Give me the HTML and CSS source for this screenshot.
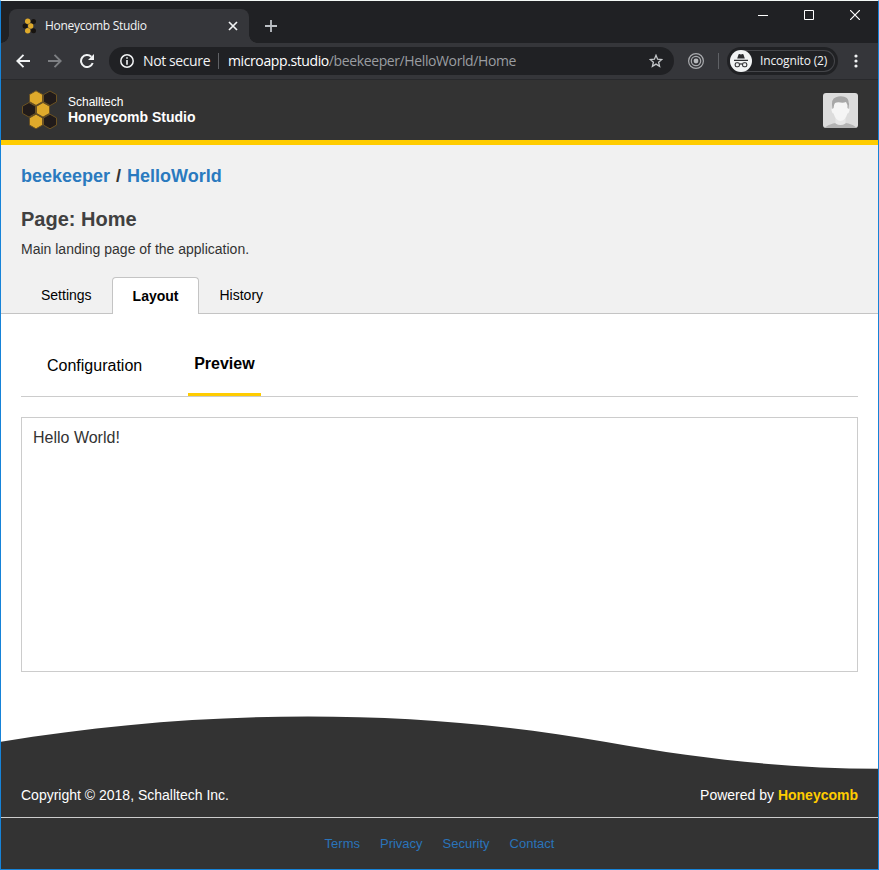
FILE: index.html
```html
<!DOCTYPE html>
<html lang="en">
<head>
<meta charset="utf-8">
<title>Honeycomb Studio</title>
<link rel="stylesheet" href="styles.css">
</head>
<body>
<svg width="0" height="0" class="defs">
  <symbol id="comb" viewBox="0 0 36 40">
    <g stroke="#6b5222" stroke-width="1">
      <path fill="#211b1a" d="M28 1l6.500 3.700v7.200L28 15.600l-6.500-3.700V4.700zM28 24.200l6.500 3.700v7.200L28 38.800l-6.500-3.700v-7.200zM7 12.500l6.500 3.700v7.200L7 27.100.5 23.400v-7.200z"/>
      <path fill="#dfaa2b" d="M14 .8l6.500 3.700v7.200L14 15.400l-6.500-3.700V4.500zM21 12.500l6.500 3.700v7.200L21 27.100l-6.500-3.700v-7.200zM14 24.200l6.500 3.700v7.200L14 38.800l-6.500-3.700v-7.200z"/>
    </g>
  </symbol>
</svg>
<div class="window">
  <div class="tabstrip">
    <div class="browser-tab">
      <svg class="favicon" width="15" height="16" viewBox="0 0 15 16"><g fill="#17130f"><circle cx="11.500" cy="3.500" r="2.500"/><circle cx="3" cy="8" r="2.500"/><circle cx="11.500" cy="12.800" r="2.500"/></g><g fill="#dfaa2b"><circle cx="5.700" cy="3.300" r="2.700"/><circle cx="8.700" cy="8" r="2.700"/><circle cx="5.700" cy="12.800" r="2.700"/></g></svg>
      <span class="tab-title">Honeycomb Studio</span>
      <svg class="tab-close" width="10" height="10" viewBox="0 0 10 10"><path d="M1 1l8 8M9 1l-8 8" stroke="#f1f3f4" stroke-width="1.7"/></svg>
    </div>
    <svg class="new-tab" width="12" height="12" viewBox="0 0 12 12"><path d="M6 0v12M0 6h12" stroke="#bdc1c6" stroke-width="1.800"/></svg>
    <div class="win-controls">
      <svg width="10" height="10" viewBox="0 0 10 10"><path d="M0 5.500h10" stroke="#fff"/></svg>
      <svg width="10" height="10" viewBox="0 0 10 10"><path d="M.5.5h9v9h-9z" fill="none" stroke="#fff"/></svg>
      <svg width="10" height="10" viewBox="0 0 10 10"><path d="M0 0l10 10M10 0L0 10" stroke="#fff" stroke-width="1.200"/></svg>
    </div>
  </div>
  <div class="toolbar">
    <div class="nav">
      <svg width="14" height="14" viewBox="0 0 14 14" fill="none" stroke="#f1f3f4" stroke-width="1.900"><path d="M14 7H1.500M7.500.800L1.300 7l6.200 6.200"/></svg>
      <svg width="14" height="14" viewBox="0 0 14 14" fill="none" stroke="#7d7f83" stroke-width="1.900"><path d="M0 7h12.500M6.500.800L12.700 7l-6.200 6.200"/></svg>
      <svg width="14" height="14" viewBox="0 0 14 14" fill="none" stroke="#f1f3f4" stroke-width="2"><path d="M12.700 9A6 6 0 1 1 11.300 2.800"/><path fill="#f1f3f4" stroke="none" d="M14 0v6H8z"/></svg>
    </div>
    <div class="omnibox">
      <svg width="14" height="14" viewBox="0 0 14 14"><circle cx="7" cy="7" r="6.200" fill="none" stroke="#f1f3f4" stroke-width="1.500"/><path d="M7 3.200v1.600M7 6v4.800" stroke="#f1f3f4" stroke-width="1.600"/></svg>
      <span class="secure">Not secure</span>
      <span class="sep"></span>
      <span class="url"><b>microapp.studio</b>/beekeeper/HelloWorld/Home</span>
      <svg class="star" width="14" height="14" viewBox="0 0 14 14"><path d="M7 1.300l1.600 3.900 4.200.3-3.200 2.700 1 4.200L7 10.100l-3.600 2.300 1-4.200-3.200-2.700 4.200-.3z" fill="none" stroke="#c4c7ca" stroke-width="1.300"/></svg>
    </div>
    <svg class="target" width="16" height="16" viewBox="0 0 16 16"><g fill="none" stroke="#a9abae" stroke-width="1.200"><circle cx="8" cy="8" r="7.400"/><circle cx="8" cy="8" r="4.700"/></g><circle cx="8" cy="8" r="2.400" fill="#b8babd"/></svg>
    <span class="sep toolbar-sep"></span>
    <div class="incognito">
      <div class="incognito-pill">
        <svg width="22" height="22" viewBox="0 0 22 22"><circle cx="11" cy="11" r="11" fill="#f1f3f4"/><path fill="#2d2e31" d="M7.200 8.500l1.300-4q.2-.6.900-.4l1.600.4 1.600-.4q.7-.2.900.4l1.300 4zM4 9.700h14v1.300H4z"/><g fill="none" stroke="#2d2e31" stroke-width="1.100"><rect x="5.200" y="12.700" width="4.200" height="4" rx="1.500"/><rect x="12.600" y="12.700" width="4.200" height="4" rx="1.500"/><path d="M9.400 14.300q1.600-.8 3.200 0"/></g></svg>
        <span>Incognito (2)</span>
      </div>
    </div>
    <svg class="dots" width="4" height="14" viewBox="0 0 4 14" fill="#f1f3f4"><circle cx="2" cy="2" r="1.600"/><circle cx="2" cy="7" r="1.600"/><circle cx="2" cy="12" r="1.600"/></svg>
  </div>

  <header class="app-header">
    <svg class="logo" width="36" height="40"><use href="#comb"/></svg>
    <div class="brand"><span>Schalltech</span><strong>Honeycomb Studio</strong></div>
    <svg class="avatar" width="35" height="35" viewBox="0 0 35 35">
      <rect width="35" height="35" fill="#dcdcdc"/>
      <path fill="#b3b3b3" d="M1 35q4-3.500 9-4.500 4-1 7.500-1t8 1q5 1 8.500 4.500z"/>
      <path fill="#e7e7e7" d="M12.500 25h10v5.500q-5 3-10 0z"/>
      <path fill="#f5f5f5" d="M9.500 15q-1.500 0-1 2.500t2 3q2.500 7.500 7 7.500t7-7.500q1.500-.5 2-3t-1-2.500V9h-16z"/>
      <path fill="#a7a7a7" d="M9.400 16Q7.500 5.500 13 4.300q4-2 8.300-.5Q27.500 5 25.600 16l-1.100-1q.2-4-1.500-6-2.500 1-5.500.5t-5.500.4Q10.500 12 10.600 15z"/>
    </svg>
  </header>

  <section class="page-head">
    <div class="crumbs"><a>beekeeper</a><span>/</span><a>HelloWorld</a></div>
    <h1>Page: Home</h1>
    <p>Main landing page of the application.</p>
    <nav class="tabs"><a>Settings</a><a class="active">Layout</a><a>History</a></nav>
  </section>

  <main>
    <nav class="subtabs"><a class="config">Configuration</a><a class="active">Preview</a></nav>
    <div class="preview">Hello World!</div>
  </main>

  <footer>
    <svg class="wave" width="877" height="60" viewBox="1 710 877 60"><path fill="#333" d="M1 741.700C205 708 416 708 606 742C700 759 790 768.700 878 768.700V770H1z"/></svg>
    <div class="foot-main"><span>Copyright © 2018, Schalltech Inc.</span><span>Powered by <b>Honeycomb</b></span></div>
    <div class="foot-links"><a>Terms</a><a>Privacy</a><a>Security</a><a>Contact</a></div>
  </footer>
</div>
</body>
</html>
```

FILE: styles.css
```css
* { box-sizing: border-box; }
body { margin: 0; background: #fff; font-family: "Liberation Sans", Arial, sans-serif; font-size: 14px; color: #333; }
svg { display: block; flex: none; }
.defs { position: absolute; }
.window { width: 879px; height: 870px; border: 1px solid #1683d8; border-top-color: #f4f9f6; overflow: hidden; display: flex; flex-direction: column; }

.tabstrip, .toolbar { font-family: "Open Sans", "Noto Sans", sans-serif; color: #f1f3f4; white-space: nowrap; flex: none; }
.tabstrip { height: 42px; background: #202124; display: flex; align-items: flex-start; }
.browser-tab { width: 240px; height: 34px; margin: 8px 0 0 8px; padding: 0 11px 0 13px; border-radius: 8px 8px 0 0; background: #35363a; display: flex; align-items: center; position: relative; }
.browser-tab::before, .browser-tab::after { content: ""; position: absolute; bottom: 0; width: 8px; height: 8px; }
.browser-tab::before { left: -8px; background: radial-gradient(circle at 0 0, transparent 7.500px, #35363a 8px); }
.browser-tab::after { right: -8px; background: radial-gradient(circle at 100% 0, transparent 7.500px, #35363a 8px); }
.tab-title { margin-left: 8px; padding-bottom: 1px; font-size: 12px; letter-spacing: -.3px; }
.tab-close { margin-left: auto; }
.new-tab { margin: 19px 0 0 16px; }
.win-controls { margin: 9px 18px 0 auto; display: flex; gap: 36px; }

.toolbar { height: 37px; background: #35363a; border-bottom: 1px solid #28292c; display: flex; align-items: center; }
.nav { display: flex; gap: 18px; margin-left: 15px; }
.omnibox { width: 565px; height: 28px; margin-left: 15px; padding: 0 11px; border-radius: 14px; background: #202124; display: flex; align-items: center; font-size: 14px; letter-spacing: -.39px; }
.secure { width: 67px; margin-left: 9px; padding-bottom: 1px; }
.sep { width: 1px; height: 16px; background: #5f6165; margin: 0 9px 0 8px; }
.url { color: #9a9da1; padding-bottom: 1px; }
.url b { font-weight: 400; color: #fff; }
.star { margin-left: auto; }
.target { margin-left: 14px; }
.toolbar-sep { margin: 0 8px 0 14px; }
.incognito { width: 111px; height: 28px; padding: 3px; border-radius: 14px; background: #202124; }
.incognito-pill { height: 22px; border-radius: 11px; box-shadow: inset 0 0 0 1px #45464a; display: flex; align-items: center; gap: 8px; font-size: 12px; letter-spacing: -.15px; }
.incognito-pill span { padding-bottom: 1px; }
.dots { margin-left: 16px; }

.app-header { height: 65px; flex: none; background: #333; border-bottom: 5px solid #fc0; padding: 0 20px 0 21px; display: flex; align-items: center; color: #fff; }
.logo { margin-left: -.5px; }
.brand { margin-left: 10.5px; display: flex; flex-direction: column; font-size: 12px; line-height: 15px; }
.brand strong { font-size: 14px; line-height: 15px; }
.avatar { margin-left: auto; border-radius: 3px; }

.page-head { height: 169px; flex: none; background: #f1f1f1; border-bottom: 1px solid #c4c4c4; padding: 20px 20px 0; display: flex; flex-direction: column; }
.crumbs { font-size: 18px; line-height: 22px; font-weight: 700; }
.crumbs a { color: #2a7abf; }
.crumbs span { margin: 0 6px; }
h1 { margin: 19px 0 0; font-size: 20px; line-height: 26px; color: #404040; }
p { margin: 9px 0 0; line-height: 16px; }
.tabs { margin-top: auto; display: flex; align-items: flex-end; color: #000; margin-bottom: -1px; }
.tabs a { height: 37px; padding: 0 20px; line-height: 36px; }
.tabs a.active { background: #fff; border: 1px solid #c4c4c4; border-bottom: 0; border-radius: 4px 4px 0 0; font-weight: 700; }

main { padding: 0 20px; flex: none; }
.subtabs { height: 83px; border-bottom: 1px solid #ccc; display: flex; align-items: flex-end; font-size: 16px; color: #000; padding-left: 26px; }
.subtabs a { height: 62px; line-height: 64px; }
.subtabs .active { margin-left: 46px; padding: 0 6px; line-height: 60px; border-bottom: 3px solid #fc0; font-weight: 700; }
.preview { height: 255px; margin-top: 20px; border: 1px solid #ccc; padding: 10px 11px; font-size: 16px; line-height: 19px; }

footer { margin-top: auto; flex: none; color: #fff; }
.foot-main { height: 48px; background: #333; border-bottom: 1px solid #ccc; padding: 17px 20px 0; display: flex; justify-content: space-between; line-height: 16px; }
.foot-main b { color: #fc0; }
.foot-links { height: 51px; background: #333; color: #2a74ba; display: flex; justify-content: center; gap: 20px; font-size: 13px; line-height: 51px; }
```
